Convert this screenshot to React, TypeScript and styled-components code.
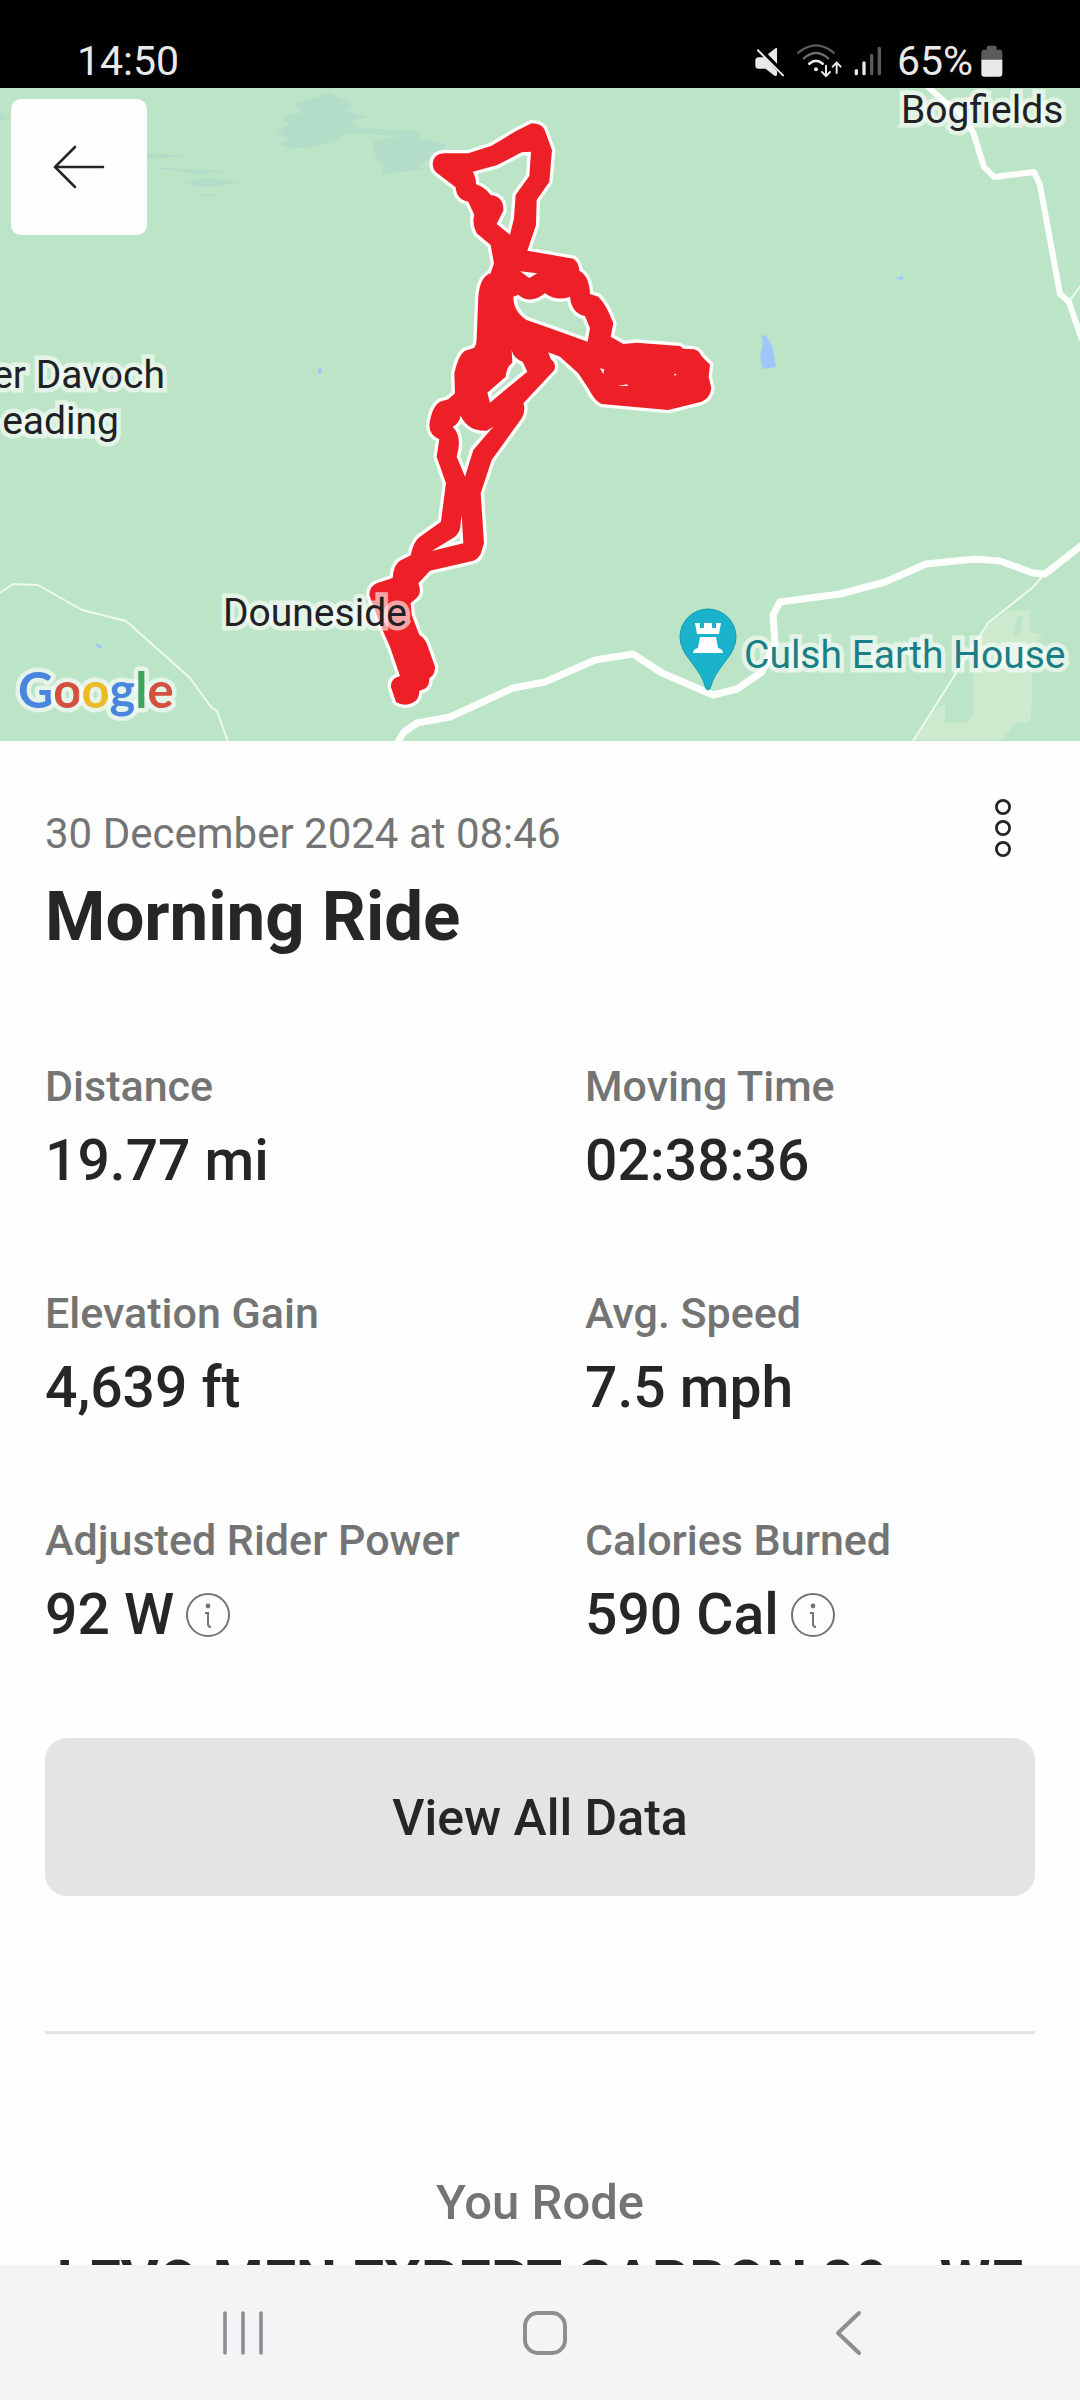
import React from "react";
import styled, { createGlobalStyle } from "styled-components";

const stats = [
  { label: "Distance", value: "19.77 mi" },
  { label: "Moving Time", value: "02:38:36" },
  { label: "Elevation Gain", value: "4,639 ft" },
  { label: "Avg. Speed", value: "7.5 mph" },
  { label: "Adjusted Rider Power", value: "92 W", info: true },
  { label: "Calories Burned", value: "590 Cal", info: true },
];

// outline of the recorded track, followed by the gaps inside it
const trackPath = [
  "M278 190Q280 163 310 160L385 160L455 137L530 92L575 70Q604 70 613 88L636 150L628 245L590 300L588 375L562 452L700 476Q716 485 718 512Q748 528 750 582L775 590Q800 615 820 670L812 710L850 732L890 728L1020 738L1030 746L1062 748Q1078 752 1084 768L1110 794L1106 830L1114 865Q1110 895 1085 905L985 930L785 912Q765 905 745 865L715 820L660 770L625 757L632 777Q650 790 643 810L550 910Q558 932 545 955L455 1080L422 1180L432 1330L422 1362Q413 1378 400 1382L270 1412L235 1450Q246 1478 232 1492L212 1510L215 1545L238 1605Q255 1615 262 1635L285 1700Q285 1725 268 1735Q270 1768 238 1772Q238 1800 215 1810Q190 1820 168 1806L153 1762Q150 1735 180 1728L150 1640L130 1595L108 1540L88 1485Q88 1460 110 1450L158 1434Q160 1395 180 1382L212 1366Q220 1325 240 1310L303 1265L318 1150L290 1070L298 1018Q268 1005 268 975Q275 920 300 905L325 898L345 880L343 820Q355 765 375 752L402 744Q410 735 410 715L415 590Q420 530 452 520L462 490L452 435L410 400Q395 370 403 345L385 305Q350 300 347 262L290 218Q278 210 278 190Z",
  "M398 215L470 196L545 157L573 155L568 228L527 285L522 355L510 404L470 372L490 332Q492 290 452 285Q435 262 408 253Q408 230 398 215Z",
  "M540 514L592 520L568 534Z",
  "M520 590L535 584Q570 615 615 580Q650 605 690 590Q695 640 735 648L750 685L743 725L645 690L560 660Q520 635 520 590Z",
  "M515 750Q520 775 548 785L562 815L450 908L442 878L497 830Q500 800 517 788Z",
  "M362 947Q385 995 440 992L460 980L400 1050L375 1130L350 1070Q368 1010 338 980Q358 970 362 947Z",
  "M365 1245L370 1330L275 1353L345 1310Q362 1295 362 1270Z",
  "M780 805L793 808L790 823Z",
  "M833 858L862 853L864 858Z",
  "M1002 822L1010 821L1005 828Z",
].join("");

const MuteIcon = () => (
  <svg width="33" height="33" viewBox="155 130 100 100" aria-label="Muted">
    <g fill="#e9e9e9">
      <path d="M162 178q0-11 10-11h18l38 42v12q-4 6-10 1l-25-20h-21q-10 0-10-10z" />
      <path d="M200 158l23-18q5-3 5 3v44z" />
    </g>
    <path
      stroke="#e9e9e9"
      strokeWidth="6"
      strokeLinecap="round"
      d="M170 146l76 76"
    />
  </svg>
);

const WifiIcon = () => (
  <svg width="47" height="36" viewBox="290 129 141 108" aria-label="Wi-Fi">
    <g fill="none" strokeLinecap="round">
      <path stroke="#5b5b5b" strokeWidth="7" d="M297 158Q350 114 403 158" />
      <path stroke="#6e6e6e" strokeWidth="7" d="M313 175Q350 143 387 175" />
      <path stroke="#e9e9e9" strokeWidth="8" d="M330 191Q350 174 370 191" />
      <path stroke="#e9e9e9" strokeWidth="6" d="M380 197v31m-12-12l12 12l12-12" />
      <path stroke="#e9e9e9" strokeWidth="6" d="M412 219v-31m-12 12l12-12l12 12" />
    </g>
    <circle cx="350" cy="208" r="6" fill="#e9e9e9" />
  </svg>
);

const SignalIcon = () => (
  <svg width="30" height="32" viewBox="452 133 90 96" aria-label="Signal">
    <g strokeWidth="10" strokeLinecap="round">
      <path stroke="#e9e9e9" d="M462 210v9M485 187v32" />
      <path stroke="#5b5b5b" d="M508 164v55M531 143v76" />
    </g>
  </svg>
);

const BatteryIcon = () => (
  <svg width="22" height="32" viewBox="845 133 66 96" aria-label="Battery">
    <path
      fill="#5b5b5b"
      d="M846 178v-22q0-9 9-9h7v-6q0-6 6-6h18q6 0 6 6v6h8q9 0 9 9v22z"
    />
    <path fill="#e9e9e9" d="M846 177h63v42q0 9-9 9h-45q-9 0-9-9z" />
  </svg>
);

const InfoIcon = () => (
  <svg width="44" height="44" viewBox="0 0 44 44" aria-hidden="true">
    <g fill="none" stroke="#747474" strokeWidth="2">
      <circle cx="22" cy="22" r="21" />
      <path d="M19 20h3v11q0 3 3 3" />
    </g>
    <circle cx="22" cy="13" r="2.4" fill="#747474" />
  </svg>
);

const RouteMap = () => (
  <MapSvg viewBox="0 88 1080 653" role="img" aria-label="Route map">
    <rect y="88" width="1080" height="653" fill="#bce4c6" />
    <g fill="#b3ddc9">
      <path d="M329 93L355 104L346 110L368 117L352 121L357 128L420 131L418 138L446 144L440 155L418 165L424 170L380 174L384 165Q373 160 373 142L400 136L347 133L335 140L312 147L290 149L277 144L288 139L276 130L290 126L281 117L301 113L294 104Z" />
      <path d="M147 153L188 156L147 159zM147 167L226 171L200 174zM180 182L210 178L240 182L215 187L196 187zM192 194L222 194L212 197z" />
      <path d="M0 114L10 118L0 122z" />
    </g>
    <path
      fill="#cdeacf"
      d="M1030 610V633L1043 634L1032 646V703L1030 722L1015 723L1002 740H915L932 712L945 704V723H966L973 715V660L977 640L988 625L1008 611Z"
    />
    <path fill="#bce4c6" d="M1018 616h5l-3 20h-7z" />
    <g fill="#a1c6fb">
      <path d="M761 335L766 336L772 345L776 367L763 369L760 358L763 342Z" />
      <path d="M895 278L903 276V281zM318 369L322 368L321 371L323 373L318 374zM96 643L102 646L101 649L97 647z" />
    </g>
    <g fill="none" stroke="#fdfffd" strokeLinejoin="round">
      <path
        strokeWidth="7"
        d="M396 745L404 732L417 723L450 717L513 688L545 682L595 660L633 654L662 673L713 695L737 689L762 672L775 643L773 615L780 602L840 594L885 582L926 564L975 559L1000 561L1033 573L1045 574L1082 545"
      />
      <path
        strokeWidth="6"
        d="M925 84L945 102L960 113L973 132L984 167L994 177L1034 172L1040 185L1060 294L1069 302L1082 340"
      />
      <path
        strokeWidth="2"
        stroke="#eefaef"
        d="M1070 300L1082 284M0 593L13 584L38 585L82 610L126 621L190 678L211 707L217 711L228 742M1042 577L1032 588L988 623L977 640L913 741"
      />
    </g>
    <g transform="translate(340 100) scale(.33333)">
      <path
        d={trackPath}
        fill="#ed2027"
        fillRule="evenodd"
        stroke="#fffdfb"
        strokeWidth="20"
        strokeLinejoin="round"
        paintOrder="stroke"
      />
    </g>
    <MapLabel x="901" y="123">
      Bogfields
    </MapLabel>
    <MapLabel x="165" y="388" textAnchor="end">
      er Davoch
    </MapLabel>
    <MapLabel x="119" y="434" textAnchor="end">
      eading
    </MapLabel>
    <MapLabel x="223" y="626">
      Douneside
    </MapLabel>
    <MapLabel x="744" y="668" fill="#1a7f87">
      Culsh Earth House
    </MapLabel>
    <path
      fill="#1bb3cb"
      stroke="#159bb0"
      d="M708 690Q706 690 705 686Q703 677 692 663Q680 649 680 637A28 28 0 0 1 736 637Q736 649 724 663Q713 677 711 686Q710 690 708 690Z"
    />
    <path
      fill="#fff"
      d="M695 623h5v5h4v-5h8v5h4v-5h5l-2 11h-22zM700 637h16l2 11q5 1 5 5h-30q0-4 5-5z"
    />
    <GoogleMark x="18" y="708">
      <tspan fill="#4a86e0">G</tspan>
      <tspan fill="#d34f40">o</tspan>
      <tspan fill="#edb926">o</tspan>
      <tspan fill="#4a86e0">g</tspan>
      <tspan fill="#3fa35c">l</tspan>
      <tspan fill="#d34f40">e</tspan>
    </GoogleMark>
  </MapSvg>
);

const App = () => {
  return (
    <>
      <GlobalStyle />
      <Screen>
        <StatusBar>
          <Clock>14:50</Clock>
          <StatusIcons>
            <MuteIcon />
            <WifiIcon />
            <SignalIcon />
            <Charge>
              65%
              <BatteryIcon />
            </Charge>
          </StatusIcons>
        </StatusBar>
        <Scroller>
          <MapArea>
            <RouteMap />
            <BackButton type="button" aria-label="Back">
              <svg width="52" height="44" viewBox="0 0 52 44" fill="none">
                <path
                  d="M50 22H2M22 2L2 22L22 42"
                  stroke="#262626"
                  strokeWidth="2.6"
                  strokeLinecap="round"
                />
              </svg>
            </BackButton>
          </MapArea>
          <Details>
            <Header>
              <div>
                <RideDate>30 December 2024 at 08:46</RideDate>
                <Title>Morning Ride</Title>
              </div>
              <MenuButton type="button" aria-label="More options">
                <svg width="18" height="60" viewBox="0 0 18 60">
                  <g fill="none" stroke="#262626" strokeWidth="2.8">
                    <circle cx="9" cy="9" r="6.6" />
                    <circle cx="9" cy="30" r="6.6" />
                    <circle cx="9" cy="51" r="6.6" />
                  </g>
                </svg>
              </MenuButton>
            </Header>
            <StatGrid>
              {stats.map((s) => (
                <Stat key={s.label}>
                  <StatLabel>{s.label}</StatLabel>
                  <StatValue>
                    {s.value}
                    {s.info && (
                      <InfoButton type="button" aria-label={`About ${s.label}`}>
                        <InfoIcon />
                      </InfoButton>
                    )}
                  </StatValue>
                </Stat>
              ))}
            </StatGrid>
            <DataButton type="button">View All Data</DataButton>
            <Divider />
            <BikeCaption>You Rode</BikeCaption>
            <BikeName>LEVO MEN EXPERT CARBON 29 - WE</BikeName>
          </Details>
        </Scroller>
        <NavBar>
          <NavButton type="button" aria-label="Recent apps">
            <svg width="44" height="48" viewBox="0 0 44 48">
              <path
                d="M4 4v40M22 4v40M40 4v40"
                stroke="#8e8e91"
                strokeWidth="3.6"
                strokeLinecap="round"
              />
            </svg>
          </NavButton>
          <NavButton type="button" aria-label="Home">
            <svg width="48" height="48" viewBox="0 0 48 48">
              <rect
                x="4"
                y="4"
                width="40"
                height="40"
                rx="13"
                fill="none"
                stroke="#8e8e91"
                strokeWidth="4"
              />
            </svg>
          </NavButton>
          <NavButton type="button" aria-label="Back">
            <svg width="28" height="48" viewBox="0 0 28 48">
              <path
                d="M25 4L4 24L25 44"
                fill="none"
                stroke="#8e8e91"
                strokeWidth="4"
                strokeLinecap="round"
                strokeLinejoin="round"
              />
            </svg>
          </NavButton>
        </NavBar>
      </Screen>
    </>
  );
};

export default App;

const GlobalStyle = createGlobalStyle`
  * {
    box-sizing: border-box;
  }
  body {
    margin: 0;
    background: #fefefe;
    color: #262626;
    font-family: Roboto, "Liberation Sans", sans-serif;
  }
  button {
    padding: 0;
    border: 0;
    background: none;
    color: inherit;
    font: inherit;
    cursor: pointer;
  }
  svg {
    display: block;
  }
`;

const Screen = styled.div`
  display: flex;
  flex-direction: column;
  height: 100vh;
`;

const StatusBar = styled.div`
  display: flex;
  flex: none;
  align-items: center;
  justify-content: space-between;
  height: 88px;
  padding: 34px 77px 0;
  background: #000;
  color: #e9e9e9;
  font-size: 41px;
  line-height: 54px;
`;

const Clock = styled.time``;

const StatusIcons = styled.div`
  display: flex;
  align-items: center;
  gap: 10px;
`;

const Charge = styled.span`
  display: flex;
  align-items: center;
  gap: 8px;
  padding-left: 4px;
`;

const Scroller = styled.main`
  flex: 1;
  min-height: 0;
  overflow-y: auto;
  scrollbar-width: none;
`;

const MapArea = styled.section`
  position: relative;
`;

const MapSvg = styled.svg`
  width: 100%;
  height: auto;
`;

const MapLabel = styled.text`
  font-size: 39px;
  fill: ${(p) => p.fill || "#202124"};
  stroke: rgba(255, 255, 255, 0.6);
  stroke-width: 9px;
  paint-order: stroke;
`;

const GoogleMark = styled.text`
  font-family: Lato, sans-serif;
  font-size: 49px;
  font-weight: 700;
  stroke: rgba(255, 255, 255, 0.6);
  stroke-width: 9px;
  stroke-linejoin: round;
  paint-order: stroke;
`;

const BackButton = styled.button`
  position: absolute;
  top: 11px;
  left: 11px;
  display: flex;
  align-items: center;
  justify-content: center;
  width: 136px;
  height: 136px;
  border-radius: 10px;
  background: #fefefe;
`;

const Details = styled.section`
  display: flex;
  flex-direction: column;
  padding: 66px 45px 40px;
`;

const Header = styled.header`
  display: flex;
  justify-content: space-between;
  align-items: flex-start;
`;

const RideDate = styled.p`
  margin: 0 0 14px;
  color: #747474;
  font-size: 42px;
  font-weight: 400;
  line-height: 54px;
`;

const Title = styled.h1`
  margin: 0;
  font-size: 69px;
  font-weight: 700;
  line-height: 84px;
`;

const MenuButton = styled.button`
  margin: -9px 23px 0 0;
`;

const StatGrid = styled.dl`
  display: grid;
  grid-template-columns: 1fr 1fr;
  gap: 89px 90px;
  margin: 100px 0 87px;
`;

const Stat = styled.div`
  display: flex;
  flex-direction: column;
  gap: 12px;
`;

const StatLabel = styled.dt`
  color: #747474;
  font-size: 43px;
  font-weight: 500;
  line-height: 54px;
  white-space: nowrap;
`;

const StatValue = styled.dd`
  display: flex;
  align-items: center;
  gap: 12px;
  margin: 0;
  font-size: 57px;
  font-weight: 500;
  line-height: 72px;
`;

const InfoButton = styled.button`
  border-radius: 50%;
`;

const DataButton = styled.button`
  height: 158px;
  padding-top: 2px;
  border-radius: 22px;
  background: #e4e4e4;
  font-size: 50px;
  font-weight: 500;
`;

const Divider = styled.hr`
  width: 100%;
  height: 3px;
  margin: 135px 0 139px;
  border: 0;
  background: #e4e4e4;
`;

const BikeCaption = styled.p`
  margin: 0 0 11px;
  color: #747474;
  font-size: 49px;
  font-weight: 500;
  line-height: 60px;
  text-align: center;
`;

const BikeName = styled.h2`
  margin: 0;
  font-size: 58px;
  font-weight: 700;
  line-height: 74px;
  text-align: center;
  white-space: nowrap;
`;

const NavBar = styled.nav`
  display: grid;
  flex: none;
  grid-template-columns: repeat(3, 1fr);
  place-items: center;
  height: 135px;
  padding: 0 81px 0 92px;
  background: #f4f4f7;
`;

const NavButton = styled.button`
  display: flex;
  align-items: center;
  justify-content: center;
  min-width: 120px;
  height: 100%;
`;
